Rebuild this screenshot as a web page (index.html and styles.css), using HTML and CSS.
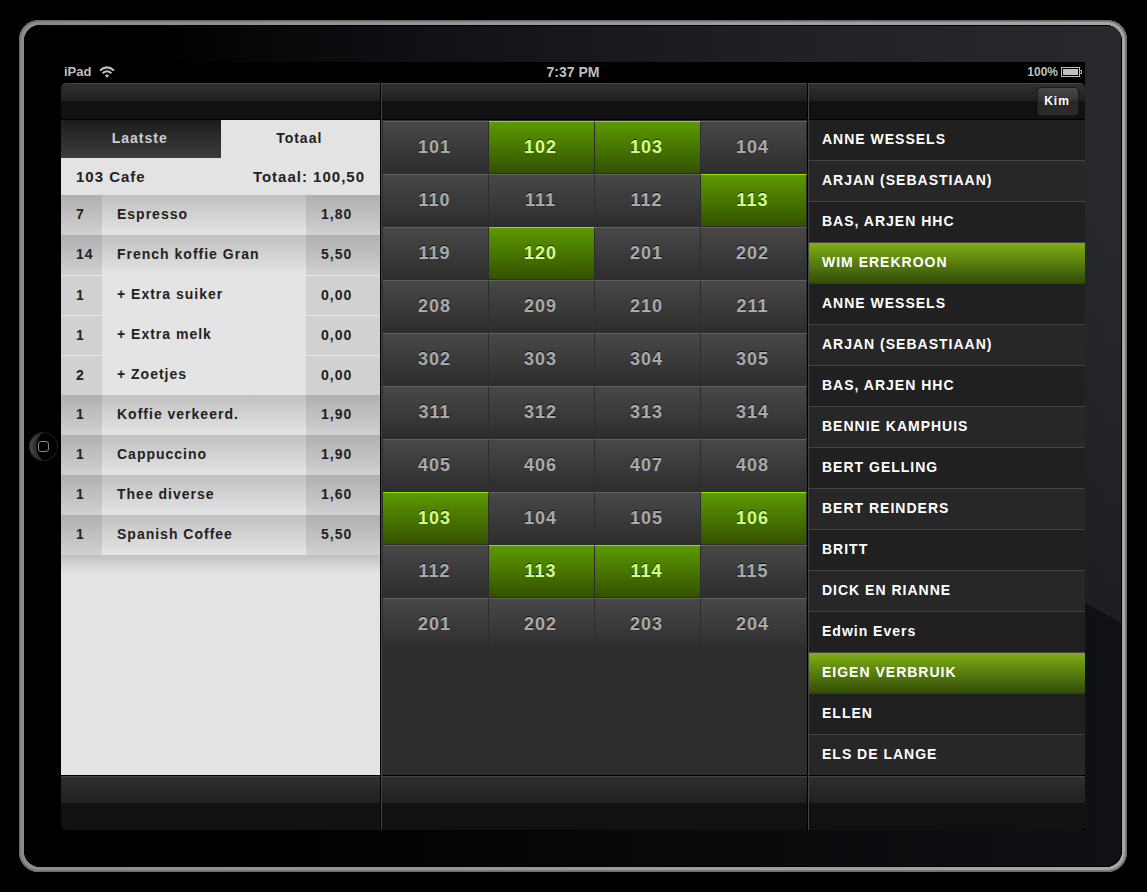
FILE: index.html
```html
<!DOCTYPE html>
<html lang="nl">
<head>
    <meta charset="UTF-8">
    <meta name="viewport" content="width=device-width, initial-scale=1.0">
    <title>Kassa</title>
    <link rel="stylesheet" href="styles.css">
</head>
<body>
    <div class="device">
        <div class="bezel">
            <button class="home-button" aria-label="Home"><span class="home-icon"></span></button>

            <div class="screen">
                <div class="status-bar">
                    <div class="status-left">
                        <span>iPad</span>
                        <svg class="wifi" width="16" height="12" viewBox="0 0 16 12" fill="none" stroke="#bfbfbf" stroke-width="2">
                            <path d="M1 4.4Q8 -1.6 15 4.4"/>
                            <path d="M3.6 7.2Q8 3.2 12.4 7.2"/>
                            <path d="M8 11.8L5.8 9.4Q8 7.4 10.2 9.4Z" fill="#bfbfbf" stroke="none"/>
                        </svg>
                    </div>
                    <span class="status-time">7:37 PM</span>
                    <div class="status-right">
                        <span>100%</span>
                        <svg width="21" height="10" viewBox="0 0 21 10">
                            <rect x="0.5" y="0.5" width="18" height="9" fill="none" stroke="#bfbfbf"/>
                            <rect x="2" y="2" width="15" height="6" fill="#bfbfbf"/>
                            <path d="M19 3.5H20.5V6.5H19" fill="none" stroke="#bfbfbf"/>
                        </svg>
                    </div>
                </div>

                <div class="panes">
                    <!-- bestelling -->
                    <section class="pane order">
                        <div class="toolbar"></div>
                        <div class="pane-body">
                            <div class="tabs">
                                <button class="tab">Laatste</button>
                                <button class="tab active">Totaal</button>
                            </div>
                            <div class="summary">
                                <span>103 Cafe</span>
                                <span>Totaal: 100,50</span>
                            </div>
                            <table class="order-table">
                                <tbody>
                                    <tr><td class="qty">7</td><td>Espresso</td><td class="price">1,80</td></tr>
                                    <tr><td class="qty">14</td><td>French koffie Gran</td><td class="price">5,50</td></tr>
                                    <tr class="extra"><td class="qty">1</td><td>+ Extra suiker</td><td class="price">0,00</td></tr>
                                    <tr class="extra"><td class="qty">1</td><td>+ Extra melk</td><td class="price">0,00</td></tr>
                                    <tr class="extra"><td class="qty">2</td><td>+ Zoetjes</td><td class="price">0,00</td></tr>
                                    <tr><td class="qty">1</td><td>Koffie verkeerd.</td><td class="price">1,90</td></tr>
                                    <tr><td class="qty">1</td><td>Cappuccino</td><td class="price">1,90</td></tr>
                                    <tr><td class="qty">1</td><td>Thee diverse</td><td class="price">1,60</td></tr>
                                    <tr><td class="qty">1</td><td>Spanish Coffee</td><td class="price">5,50</td></tr>
                                </tbody>
                            </table>
                            <div class="table-shadow"></div>
                        </div>
                        <div class="bottom-bar"></div>
                    </section>

                    <!-- tafels -->
                    <section class="pane tables">
                        <div class="toolbar"></div>
                        <div class="pane-body">
                            <div class="table-grid">
                                <button>101</button>
                                <button class="busy">102</button>
                                <button class="busy">103</button>
                                <button>104</button>
                                <button>110</button>
                                <button>111</button>
                                <button>112</button>
                                <button class="busy">113</button>
                                <button>119</button>
                                <button class="busy">120</button>
                                <button>201</button>
                                <button>202</button>
                                <button>208</button>
                                <button>209</button>
                                <button>210</button>
                                <button>211</button>
                                <button>302</button>
                                <button>303</button>
                                <button>304</button>
                                <button>305</button>
                                <button>311</button>
                                <button>312</button>
                                <button>313</button>
                                <button>314</button>
                                <button>405</button>
                                <button>406</button>
                                <button>407</button>
                                <button>408</button>
                                <button class="busy">103</button>
                                <button>104</button>
                                <button>105</button>
                                <button class="busy">106</button>
                                <button>112</button>
                                <button class="busy">113</button>
                                <button class="busy">114</button>
                                <button>115</button>
                                <button>201</button>
                                <button>202</button>
                                <button>203</button>
                                <button>204</button>
                            </div>
                        </div>
                        <div class="bottom-bar"></div>
                    </section>

                    <!-- klanten -->
                    <section class="pane customers">
                        <div class="toolbar">
                            <button class="user-button">Kim</button>
                        </div>
                        <div class="pane-body">
                            <ul class="customer-list">
                                <li><a href="#">ANNE WESSELS</a></li>
                                <li><a href="#">ARJAN (SEBASTIAAN)</a></li>
                                <li><a href="#">BAS, ARJEN HHC</a></li>
                                <li class="selected"><a href="#">WIM EREKROON</a></li>
                                <li><a href="#">ANNE WESSELS</a></li>
                                <li><a href="#">ARJAN (SEBASTIAAN)</a></li>
                                <li><a href="#">BAS, ARJEN HHC</a></li>
                                <li><a href="#">BENNIE KAMPHUIS</a></li>
                                <li><a href="#">BERT GELLING</a></li>
                                <li><a href="#">BERT REINDERS</a></li>
                                <li><a href="#">BRITT</a></li>
                                <li><a href="#">DICK EN RIANNE</a></li>
                                <li><a href="#">Edwin Evers</a></li>
                                <li class="selected"><a href="#">EIGEN VERBRUIK</a></li>
                                <li><a href="#">ELLEN</a></li>
                                <li><a href="#">ELS DE LANGE</a></li>
                            </ul>
                        </div>
                        <div class="bottom-bar"></div>
                    </section>
                </div>
            </div>
        </div>
    </div>
</body>
</html>
```

FILE: styles.css
```css
* {
    box-sizing: border-box;
}
body {
    margin: 0;
    padding: 20px 20px 20px 19px;
    min-height: 100vh;
    display: flex;
    background-color: #000;
    font-family: "Liberation Sans", Arial, sans-serif;
    font-weight: bold;
    font-size: 14px;
    letter-spacing: 1px;
}
button {
    margin: 0;
    padding: 0 2px 2px 0;
    border: none;
    font: inherit;
    letter-spacing: inherit;
    cursor: pointer;
}

/* behuizing */
.device {
    flex: 1;
    display: flex;
    padding: 5px;
    border-radius: 20px;
    background: linear-gradient(to right, #8c8c8c, #a6a6a6);
    box-shadow: inset 0 0 0 1px #6c6c6c, inset 0 0 0 2px #7c7c7c;
}
.bezel {
    position: relative;
    flex: 1;
    display: grid;
    grid-template-columns: 37px 1fr;
    align-items: center;
    padding: 37px 37px 37px 0;
    border-radius: 16px;
    background: linear-gradient(to right, #000 20%, #101115);
    box-shadow: inset 0 0 0 1px #000;
    overflow: hidden;
}
/* lichtval over het glas */
.bezel::before {
    content: "";
    position: absolute;
    inset: 1px;
    clip-path: polygon(0 0, 100% 0, 100% 71%);
    background: linear-gradient(to bottom, transparent 20%, rgba(0, 0, 0, 0.4)), linear-gradient(to right, #000 12%, #101216 38%, #202125 70%, #28292e);
}
.home-button {
    justify-self: end;
    display: flex;
    align-items: center;
    justify-content: center;
    width: 29px;
    height: 29px;
    margin-right: 3px;
    padding: 0;
    border-radius: 50%;
    background: radial-gradient(circle at 26px 50%, #000 18px, #2a2a2a 19px, #505050 26px);
    box-shadow: inset 0 0 0 1px #1c1c1c;
}
.home-icon {
    width: 11px;
    height: 11px;
    border: 1px solid #8a8a8a;
    border-radius: 3px;
}

/* scherm */
.screen {
    position: relative;
    align-self: stretch;
    display: flex;
    flex-direction: column;
    min-width: 0;
    background-color: #000;
}
.status-bar {
    display: grid;
    grid-template-columns: 1fr auto 1fr;
    align-items: center;
    height: 21px;
    padding: 0 3px 2px;
    color: #bfbfbf;
    font-size: 13px;
    line-height: 18px;
    letter-spacing: 0;
}
.status-left, .status-right {
    display: flex;
    align-items: center;
}
.status-left {
    gap: 8px;
}
.status-time {
    font-size: 14px;
}
.status-right {
    justify-content: flex-end;
    gap: 3px;
    font-size: 12px;
}
.panes {
    flex: 1;
    display: grid;
    grid-template-columns: 320fr 427fr 277fr;
    border-radius: 5px;
    overflow: hidden;
}
.pane {
    display: flex;
    flex-direction: column;
    min-width: 0;
    border-left: 1px solid #444;
    border-right: 1px solid #000;
}
.pane:first-child {
    border-left: none;
}
.pane:last-child {
    border-right: none;
}
.pane-body {
    flex: 1;
}
.toolbar {
    display: flex;
    justify-content: flex-end;
    height: 37px;
    padding: 3px 6px 0 0;
    border-top: 1px solid #444;
    border-bottom: 1px solid #000;
    background: linear-gradient(#2f2f2f, #202020 17px, #111 17px);
}
.bottom-bar {
    height: 55px;
    border-top: 1px solid #000;
    box-shadow: inset 0 1px #444;
    background: linear-gradient(#2f2f2f, #202020 50%, #111 50%);
}
.user-button {
    width: 42px;
    height: 29px;
    border: 1px solid #1a1a1a;
    border-radius: 4px;
    background: linear-gradient(#484848, #333 48%, #262626 50%, #2c2c2c);
    color: #fff;
    font-size: 12px;
}

/* bestelling */
.order {
    color: #222;
}
.order .pane-body {
    background-color: #e3e3e3;
}
.tabs {
    display: grid;
    grid-template-columns: 1fr 1fr;
    height: 38px;
}
.tab {
    background: linear-gradient(#1c1c1c, #3d3d3d);
    color: #ccc;
}
.tab.active {
    background: none;
    color: #222;
}
.summary {
    display: flex;
    justify-content: space-between;
    padding: 0 15px;
    font-size: 15px;
    line-height: 37px;
}
.order-table {
    width: 100%;
    border-collapse: collapse;
}
.order-table tr {
    height: 40px;
    background: linear-gradient(#c1c1c1, #e4e4e4);
}
.order-table td {
    padding: 0 15px 2px;
}
.order-table .qty {
    width: 41px;
    padding-right: 0;
}
.order-table .price {
    width: 74px;
    padding-right: 0;
}
.order-table .qty, .order-table .price {
    background: linear-gradient(#b0b0b0, #d1d1d1);
}
.order-table .extra {
    background: #e4e4e4;
}
.order-table .extra .qty, .order-table .extra .price {
    padding-bottom: 0;
    background: linear-gradient(#e8e8e8 1px, #d1d1d1 1px);
}
.table-shadow {
    height: 18px;
    background: linear-gradient(#c1c1c1, #e3e3e3);
}

/* tafels */
.tables .pane-body {
    padding: 1px 0 0 1px;
    background-color: #2d2d2d;
}
.table-grid {
    display: grid;
    grid-template-columns: repeat(4, 1fr);
    grid-auto-rows: 53px;
}
.table-grid button {
    padding-bottom: 0;
    border-top: 1px solid #606060;
    border-right: 1px solid #2d2d2d;
    border-bottom: 1px solid #2d2d2d;
    background: linear-gradient(#484848, #2d2d2d);
    color: #aaa;
    font-size: 18px;
    text-shadow: 0 -1px #111;
}
.table-grid .busy {
    border-top-color: #8fe000;
    background: linear-gradient(#5c9900, #335200);
    color: #d3ff8c;
    text-shadow: 0 -1px #1c3000;
}

/* klanten */
.customers .pane-body {
    background-color: #202020;
}
.customer-list {
    margin: 0;
    padding: 0;
    list-style: none;
}
.customer-list li {
    border-bottom: 1px solid #444;
}
.customer-list li:nth-child(even) {
    background-color: #272727;
}
.customer-list li:last-child {
    border-bottom: none;
}
.customer-list .selected {
    border-bottom-color: #2b430a;
    background: linear-gradient(#7fae14, #324d08);
}
.customer-list a {
    display: block;
    padding: 0 13px 2px;
    color: #fff;
    line-height: 38px;
    text-decoration: none;
}
```
